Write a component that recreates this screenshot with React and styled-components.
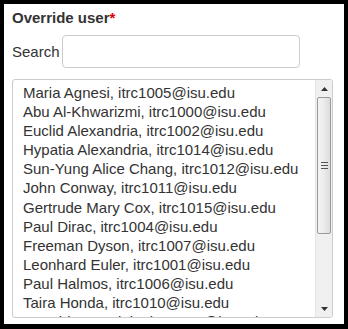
import React from "react";
import styled, { createGlobalStyle } from "styled-components";

const Global = createGlobalStyle`
  html, body { margin: 0; padding: 0; background: #000; }
  body { font-family: "Liberation Sans", Arial, sans-serif; }
`;

const Frame = styled.div`
  margin: 4px;
  width: 340px;
  height: 320px;
  background: #fff;
  box-sizing: border-box;
  padding: 5px 11px 0 8px;
  overflow: hidden;
`;

const Title = styled.div`
  font-weight: bold;
  font-size: 15px;
  color: #333;
  line-height: 18px;
`;

const Req = styled.span`
  color: #d00;
`;

const SearchRow = styled.div`
  display: flex;
  align-items: center;
  margin-top: 8px;
  font-size: 15px;
  color: #333;
`;

const Input = styled.input`
  width: 238px;
  height: 33px;
  box-sizing: border-box;
  border: 1px solid #ccc;
  border-radius: 4px;
  margin: 0 0 0 2px;
  padding: 4px 6px;
  font: inherit;
  outline: none;
`;

const Listbox = styled.div`
  margin-top: 11px;
  display: flex;
  height: 239px;
  border: 1px solid #ccc;
  border-radius: 3px;
  box-sizing: border-box;
  overflow: hidden;
`;

const Options = styled.div`
  flex: 1;
  padding: 3px 0 0 10px;
  overflow: hidden;
`;

const Option = styled.div`
  font-size: 15px;
  line-height: 19.1px;
  color: #333;
  white-space: nowrap;
`;

const Scrollbar = styled.div`
  width: 17px;
  display: flex;
  flex-direction: column;
  background: #f0f0f0;
  border-left: 1px solid #e6e6e6;
  box-sizing: border-box;
`;

const ArrowBtn = styled.div`
  height: 17px;
  display: flex;
  align-items: center;
  justify-content: center;
`;

const Track = styled.div`
  flex: 1;
  display: flex;
  flex-direction: column;
  padding: 0 1px;
`;

const Thumb = styled.div`
  height: 135px;
  border: 1px solid #9a9a9a;
  border-radius: 2px;
  background: linear-gradient(to right, #f4f4f4 0%, #ececec 45%, #dcdcdc 100%);
  display: flex;
  align-items: center;
  justify-content: center;
`;

const users = [
  "Maria Agnesi, itrc1005@isu.edu",
  "Abu Al-Khwarizmi, itrc1000@isu.edu",
  "Euclid Alexandria, itrc1002@isu.edu",
  "Hypatia Alexandria, itrc1014@isu.edu",
  "Sun-Yung Alice Chang, itrc1012@isu.edu",
  "John Conway, itrc1011@isu.edu",
  "Gertrude Mary Cox, itrc1015@isu.edu",
  "Paul Dirac, itrc1004@isu.edu",
  "Freeman Dyson, itrc1007@isu.edu",
  "Leonhard Euler, itrc1001@isu.edu",
  "Paul Halmos, itrc1006@isu.edu",
  "Taira Honda, itrc1010@isu.edu",
  "Ronald Lee Adele, itrc1003@isu.edu",
];

export default function App() {
  return (
    <>
      <Global />
      <Frame>
        <Title>
          Override user<Req>*</Req>
        </Title>
        <SearchRow>
          <span>Search</span>
          <Input type="text" />
        </SearchRow>
        <Listbox>
          <Options>
            {users.map((u) => (
              <Option key={u}>{u}</Option>
            ))}
          </Options>
          <Scrollbar>
            <ArrowBtn>
              <svg width="7" height="4" viewBox="0 0 7 4">
                <path d="M3.5 0 L7 4 L0 4 Z" fill="#333" />
              </svg>
            </ArrowBtn>
            <Track>
              <Thumb>
                <svg width="7" height="7" viewBox="0 0 7 7">
                  <rect x="0" y="0" width="7" height="1" fill="#555" />
                  <rect x="0" y="3" width="7" height="1" fill="#555" />
                  <rect x="0" y="6" width="7" height="1" fill="#555" />
                </svg>
              </Thumb>
            </Track>
            <ArrowBtn>
              <svg width="7" height="4" viewBox="0 0 7 4">
                <path d="M0 0 L7 0 L3.5 4 Z" fill="#333" />
              </svg>
            </ArrowBtn>
          </Scrollbar>
        </Listbox>
      </Frame>
    </>
  );
}
